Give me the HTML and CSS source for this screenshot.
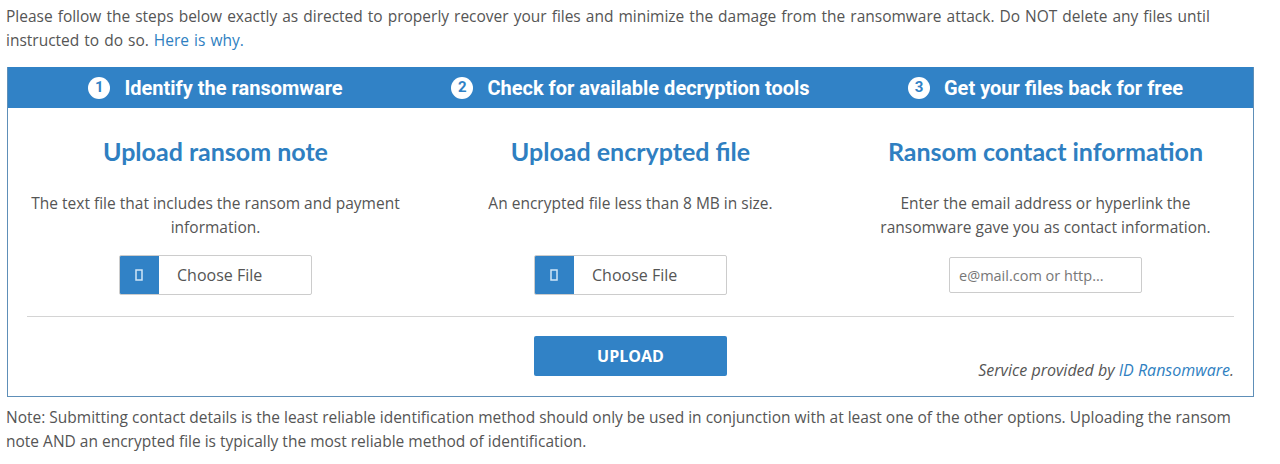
FILE: index.html
```html
<!DOCTYPE html>
<html lang="en">
<head>
<meta charset="utf-8">
<title>Identify the ransomware</title>
<link rel="stylesheet" href="styles.css">
</head>
<body>
<div class="page">
  <p class="intro">Please follow the steps below exactly as directed to properly recover your files and minimize the damage from the ransomware attack. Do NOT delete any files until instructed to do so. <a href="#">Here is why.</a></p>

  <div class="box">
    <div class="steps">
      <div class="step"><span class="num">1</span>Identify the ransomware</div>
      <div class="step"><span class="num">2</span>Check for available decryption tools</div>
      <div class="step"><span class="num">3</span>Get your files back for free</div>
    </div>

    <div class="cols">
      <div class="col">
        <h2>Upload ransom note</h2>
        <p class="desc">The text file that includes the ransom and payment information.</p>
        <div class="file">
          <span class="file-btn"><svg width="8" height="12" viewBox="0 0 8 12"><rect x="1" y="1" width="6" height="10" fill="none" stroke="#cfe6f7" stroke-width="1.5"/></svg></span>
          <span class="file-label">Choose File</span>
        </div>
      </div>
      <div class="col">
        <h2>Upload encrypted file</h2>
        <p class="desc">An encrypted file less than 8 MB in size.</p>
        <div class="file">
          <span class="file-btn"><svg width="8" height="12" viewBox="0 0 8 12"><rect x="1" y="1" width="6" height="10" fill="none" stroke="#cfe6f7" stroke-width="1.5"/></svg></span>
          <span class="file-label">Choose File</span>
        </div>
      </div>
      <div class="col">
        <h2>Ransom contact information</h2>
        <p class="desc">Enter the email address or hyperlink the ransomware gave you as contact information.</p>
        <input class="email" type="text" placeholder="e@mail.com or http...">
      </div>
    </div>

    <div class="divider"></div>

    <div class="actions">
      <div></div>
      <button class="upload" type="button">UPLOAD</button>
      <p class="service">Service provided by <a href="#">ID Ransomware</a>.</p>
    </div>
  </div>

  <p class="note">Note: Submitting contact details is the least reliable identification method should only be used in conjunction with at least one of the other options. Uploading the ransom note AND an encrypted file is typically the most reliable method of identification.</p>
</div>
</body>
</html>
```

FILE: styles.css
```css
* { box-sizing: border-box; }

html, body {
  margin: 0;
  padding: 0;
  background: #ffffff;
}

body {
  font-family: "Open Sans", "Noto Sans", sans-serif;
  font-size: 15.5px;
  line-height: 24px;
  color: #555555;
}

a {
  color: #2f7fc1;
  text-decoration: none;
}

.page {
  padding: 4px 26px 0 6px;
}

.intro {
  margin: 0 0 15px 0;
  word-spacing: 1px;
}

.box {
  margin-left: 1px;
  border: 1px solid #5e8fb8;
  border-top: none;
}

.steps {
  display: grid;
  grid-template-columns: 1fr 1fr 1fr;
  height: 41px;
  background: #3182c6;
  align-items: center;
}

.step {
  display: flex;
  align-items: center;
  justify-content: center;
  gap: 14px;
  font-family: Roboto, "Noto Sans", sans-serif;
  font-weight: 700;
  font-size: 20px;
  color: #ffffff;
}

.num {
  display: inline-flex;
  align-items: center;
  justify-content: center;
  width: 22px;
  height: 22px;
  border-radius: 50%;
  background: #ffffff;
  color: #3182c6;
  font-size: 15px;
  font-weight: 700;
  line-height: 1;
}

.cols {
  display: grid;
  grid-template-columns: 1fr 1fr 1fr;
  padding-top: 27px;
}

.col {
  display: flex;
  flex-direction: column;
  align-items: center;
  padding: 0 15px;
  text-align: center;
}

.col h2 {
  margin: 0;
  font-family: Lato, "Open Sans", sans-serif;
  font-weight: 700;
  font-size: 25px;
  line-height: 32px;
  color: #2f7fc1;
}

.desc {
  margin: 24px 0 0 0;
  min-height: 48px;
  max-width: 372px;
}

.file {
  display: flex;
  margin-top: 16px;
  width: 193px;
  height: 40px;
  border: 1px solid #cccccc;
  border-radius: 2px;
  overflow: hidden;
}

.file-btn {
  display: flex;
  align-items: center;
  justify-content: center;
  width: 40px;
  margin: -1px 0 -1px -1px;
  background: #3182c6;
}

.file-label {
  display: flex;
  align-items: center;
  padding-left: 18px;
  color: #555555;
  font-size: 16px;
}

.email {
  margin-top: 18px;
  width: 193px;
  height: 36px;
  border: 1px solid #cccccc;
  border-radius: 2px;
  padding: 0 9px;
  font-family: "Open Sans", "Noto Sans", sans-serif;
  font-size: 14.5px;
  color: #555555;
}

.email::placeholder {
  color: #777777;
}

.divider {
  margin: 21px 19px 0 19px;
  height: 1px;
  background: #d4d4d4;
}

.actions {
  display: grid;
  grid-template-columns: 1fr 193px 1fr;
  align-items: end;
  padding: 19px 19px 20px 19px;
}

.upload {
  width: 193px;
  height: 40px;
  border: none;
  border-radius: 2px;
  background: #3182c6;
  color: #ffffff;
  font-family: "Open Sans", "Noto Sans", sans-serif;
  font-weight: 700;
  font-size: 16px;
}

.service {
  margin: 0 0 -6px 0;
  text-align: right;
  font-style: italic;
  font-size: 16px;
}

.note {
  margin: 8px 0 0 0;
}
```
